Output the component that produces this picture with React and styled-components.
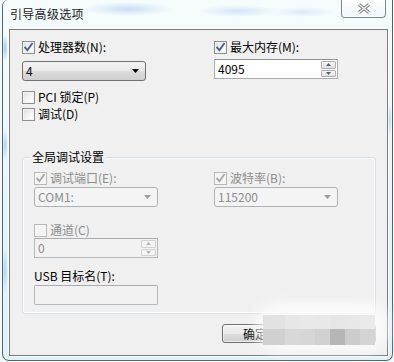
import React from 'react'
import styled, { createGlobalStyle } from 'styled-components'

const Global = createGlobalStyle`
  html, body { margin: 0; padding: 0; }
  body {
    width: 394px;
    height: 362px;
    overflow: hidden;
    background: #ffffff;
    font-family: "Noto Sans CJK SC", "Noto Sans", sans-serif;
    font-size: 12px;
    color: #000;
  }
  * { box-sizing: border-box; }
`

const Screen = styled.div`
  width: 394px;
  height: 362px;
  padding: 0 1px 1px 2px;
  background: #f3fafd;
`

const Window = styled.div`
  width: 391px;
  height: 361px;
  display: flex;
  flex-direction: column;
  border: 1px solid #56646f;
  border-top: none;
  border-radius: 6px 0 7px 7px;
  padding: 0 3px 4px 6px;
  background:
    radial-gradient(ellipse 45px 7px at 125px 9px, rgba(95, 145, 215, 0.28), transparent),
    radial-gradient(ellipse 40px 6px at 235px 11px, rgba(95, 145, 215, 0.22), transparent),
    radial-gradient(ellipse 30px 5px at 300px 12px, rgba(95, 145, 215, 0.18), transparent),
    radial-gradient(ellipse 3px 14px at 2px 48px, rgba(70, 140, 220, 0.45), transparent),
    radial-gradient(ellipse 3px 16px at 2px 145px, rgba(70, 140, 220, 0.35), transparent),
    radial-gradient(ellipse 3px 24px at 2px 270px, rgba(70, 140, 220, 0.3), transparent),
    radial-gradient(ellipse 3px 18px at 386px 120px, rgba(70, 140, 220, 0.35), transparent),
    linear-gradient(#f6fcfe, #e6f5fa 60%, #dff2f8);
`

const TitleBar = styled.div`
  height: 29px;
  display: flex;
  justify-content: space-between;
  align-items: flex-start;
  padding-left: 1px;
  margin-right: -3px;
`

const Title = styled.span`
  padding-top: 7px;
  font-size: 12px;
  line-height: 14px;
  color: #1b1b1b;
  letter-spacing: 0.3px;
`

const CloseButton = styled.div`
  width: 45px;
  height: 18px;
  margin-right: 6px;
  display: flex;
  align-items: center;
  justify-content: center;
  border: 1px solid #7d8894;
  border-top: none;
  border-radius: 0 0 4px 4px;
  background: linear-gradient(rgba(255, 255, 255, 0.75), rgba(240, 246, 250, 0.9));
  box-shadow: inset 0 0 0 1px rgba(255, 255, 255, 0.8);
`

const Client = styled.div`
  position: relative;
  width: 379px;
  height: 327px;
  border: 1px solid #7c7c7c;
  background: #f0f0f0;
  box-shadow: 0 0 0 1px rgba(255, 255, 255, 0.7);
  display: flex;
  flex-direction: column;
`

const TopSection = styled.div`
  display: grid;
  grid-template-columns: 192px 1fr;
  padding: 10px 0 0 12px;
`

const Column = styled.div`
  display: flex;
  flex-direction: column;
  align-items: flex-start;
`

const CheckRow = styled.div`
  display: flex;
  align-items: center;
  gap: 3px;
  height: 14px;
  margin-top: ${p => p.$mt || 0}px;
`

const Box = styled.span`
  width: 13px;
  height: 13px;
  display: inline-flex;
  align-items: center;
  justify-content: center;
  border: 1px solid ${p => (p.$disabled ? '#b8b8b8' : '#8e8f8f')};
  background: ${p =>
    p.$disabled
      ? '#f4f4f4'
      : 'linear-gradient(135deg, #dcdcdc, #ffffff 80%)'};
  box-shadow: inset 0 0 0 1px ${p => (p.$disabled ? '#f7f7f7' : '#f4f4f4')};
`

const Label = styled.span`
  font-size: 12px;
  line-height: 14px;
  white-space: nowrap;
  color: ${p => (p.$disabled ? '#8d8d8d' : '#000')};
  margin-top: ${p => p.$mt || 0}px;
`

const Select = styled.div`
  width: 124px;
  height: 20px;
  margin-top: ${p => p.$mt || 0}px;
  display: flex;
  align-items: center;
  justify-content: space-between;
  padding: 0 6px 0 3px;
  border: 1px solid ${p => (p.$disabled ? '#adb2b5' : '#707070')};
  border-radius: 3px;
  color: ${p => (p.$disabled ? '#8d8d8d' : '#000')};
  background: ${p =>
    p.$disabled
      ? '#f4f4f4'
      : 'linear-gradient(#f2f2f2, #ebebeb 50%, #dddddd 51%, #cfcfcf)'};
  line-height: 14px;
`

const Field = styled.div`
  width: ${p => p.$w || 124}px;
  height: 20px;
  margin-top: ${p => p.$mt || 0}px;
  display: flex;
  align-items: stretch;
  border: 1px solid ${p => (p.$disabled ? '#b5b9bc' : '#abadb3')};
  border-top-color: ${p => (p.$disabled ? '#a9adb0' : '#8f9297')};
  border-radius: ${p => (p.$round ? 2 : 0)}px;
  background: ${p => (p.$disabled ? '#f2f2f2' : '#ffffff')};
`

const FieldText = styled.span`
  flex: 1;
  padding-left: 3px;
  line-height: 18px;
  color: ${p => (p.$disabled ? '#8d8d8d' : '#000')};
`

const Spin = styled.div`
  width: 16px;
  display: flex;
  flex-direction: column;
  gap: 1px;
  padding: 1px 1px 1px 0;
`

const SpinButton = styled.div`
  flex: 1;
  display: flex;
  align-items: center;
  justify-content: center;
  border: 1px solid ${p => (p.$disabled ? '#d2d2d2' : '#b0b0b0')};
  border-radius: 1px;
  background: ${p =>
    p.$disabled ? '#f4f4f4' : 'linear-gradient(#f6f6f6, #e2e2e2)'};
`

const Group = styled.div`
  margin: 36px 0 0 12px;
  width: 354px;
  border: 1px solid #d5dfe5;
  border-radius: 3px;
  box-shadow: inset 0 0 0 1px rgba(255, 255, 255, 0.8);
  padding: 0 0 8px 11px;
`

const GroupTitle = styled.div`
  width: max-content;
  height: 14px;
  margin: -8px 0 0 -4px;
  padding: 0 2px;
  background: #f0f0f0;
  line-height: 14px;
  font-size: 12px;
`

const GroupGrid = styled.div`
  display: grid;
  grid-template-columns: 180px 1fr;
  margin-top: 7px;
`

const ButtonRow = styled.div`
  display: flex;
  justify-content: flex-end;
  gap: 14px;
  padding-right: 11px;
  margin-top: 10px;
`

const Button = styled.div`
  width: 70px;
  height: 19px;
  display: flex;
  align-items: center;
  justify-content: center;
  padding-right: 4px;
  border: 1px solid #707070;
  border-radius: 3px;
  background: linear-gradient(#f2f2f2, #ebebeb 50%, #dddddd 51%, #cfcfcf);
  box-shadow: inset 0 0 0 1px rgba(255, 255, 255, 0.6);
  line-height: 14px;
`

const Haze = styled.div`
  position: absolute;
  left: 246px;
  top: 272px;
  width: 132px;
  height: 50px;
  border-radius: 22px;
  background: rgba(252, 252, 252, 0.8);
  filter: blur(6px);
`

const Mosaic = styled.div`
  position: absolute;
  left: 253px;
  top: 285px;
  display: grid;
  grid-template-columns: 22px repeat(6, 15px);
  grid-template-rows: 14px 16px;
`

const Tile = styled.span`
  background: ${p => p.$c};
`

const mosaicColors = [
  '#e2e2e2', '#e7e7e7', '#e9e9e9', '#e8e8e8', '#e6e6e6', '#e8e8e8', '#eaeaea',
  '#d0d0d0', '#d8d8d8', '#d6d6d6', '#d1d1d1', '#b6b6b6', '#cccccc', '#d4d4d4',
]

const Check = ({ checked, disabled }) => (
  <Box $disabled={disabled}>
    {checked && (
      <svg width="11" height="11" viewBox="0 0 11 11">
        <path
          d="M2.2 5.6 L4.4 8.3 L9 1.8"
          fill="none"
          stroke={disabled ? '#a8a8a8' : '#4a5d93'}
          strokeWidth="1.9"
          strokeLinecap="square"
        />
      </svg>
    )}
  </Box>
)

const Arrow = ({ color = '#000', w = 7, h = 4 }) => (
  <svg width={w} height={h} viewBox={`0 0 ${w} ${h}`}>
    <polygon points={`0,0 ${w},0 ${w / 2},${h}`} fill={color} />
  </svg>
)

const UpArrow = ({ color }) => (
  <svg width="5" height="3" viewBox="0 0 5 3">
    <polygon points="0,3 5,3 2.5,0" fill={color} />
  </svg>
)

const SpinField = ({ value, disabled, mt }) => (
  <Field $mt={mt} $disabled={disabled}>
    <FieldText $disabled={disabled}>{value}</FieldText>
    <Spin>
      <SpinButton $disabled={disabled}>
        <UpArrow color={disabled ? '#b5b5b5' : '#4d6185'} />
      </SpinButton>
      <SpinButton $disabled={disabled}>
        <Arrow w={5} h={3} color={disabled ? '#b5b5b5' : '#4d6185'} />
      </SpinButton>
    </Spin>
  </Field>
)

export default function App() {
  return (
    <Screen>
      <Global />
      <Window>
        <TitleBar>
          <Title>引导高级选项</Title>
          <CloseButton>
            <svg width="16" height="11" viewBox="0 0 16 11">
              <path d="M3 1.5 L13 9.5 M13 1.5 L3 9.5" stroke="#7a7a7a" strokeWidth="3.4" />
              <path d="M3 1.5 L13 9.5 M13 1.5 L3 9.5" stroke="#f4f4f4" strokeWidth="1.4" />
            </svg>
          </CloseButton>
        </TitleBar>
        <Client>
          <TopSection>
            <Column>
              <CheckRow>
                <Check checked />
                <Label>处理器数(N):</Label>
              </CheckRow>
              <Select $mt={7}>
                <span>4</span>
                <Arrow />
              </Select>
              <CheckRow $mt={9}>
                <Check />
                <Label>PCI 锁定(P)</Label>
              </CheckRow>
              <CheckRow $mt={3}>
                <Check />
                <Label>调试(D)</Label>
              </CheckRow>
            </Column>
            <Column>
              <CheckRow>
                <Check checked />
                <Label>最大内存(M):</Label>
              </CheckRow>
              <SpinField value="4095" mt={5} />
            </Column>
          </TopSection>

          <Group>
            <GroupTitle>全局调试设置</GroupTitle>
            <GroupGrid>
              <Column>
                <CheckRow>
                  <Check checked disabled />
                  <Label $disabled>调试端口(E):</Label>
                </CheckRow>
                <Select $mt={2} $disabled>
                  <span>COM1:</span>
                  <Arrow color="#9c9c9c" />
                </Select>
                <CheckRow $mt={16}>
                  <Check disabled />
                  <Label $disabled>通道(C)</Label>
                </CheckRow>
                <SpinField value="0" mt={1} disabled />
                <Label $mt={11}>USB 目标名(T):</Label>
                <Field $mt={2} $disabled $round />
              </Column>
              <Column>
                <CheckRow>
                  <Check checked disabled />
                  <Label $disabled>波特率(B):</Label>
                </CheckRow>
                <Select $mt={2} $disabled>
                  <span>115200</span>
                  <Arrow color="#9c9c9c" />
                </Select>
              </Column>
            </GroupGrid>
          </Group>

          <ButtonRow>
            <Button>确定</Button>
            <Button>取消</Button>
          </ButtonRow>

          <Haze />
          <Mosaic>
            {mosaicColors.map((c, i) => (
              <Tile key={i} $c={c} />
            ))}
          </Mosaic>
        </Client>
      </Window>
    </Screen>
  )
}
